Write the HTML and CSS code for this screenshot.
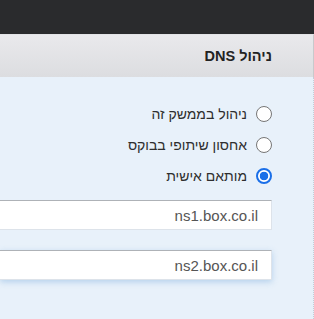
FILE: index.html
```html
<!DOCTYPE html>
<html lang="he" dir="rtl">
<head>
<meta charset="utf-8">
<link rel="stylesheet" href="styles.css">
</head>
<body>
<div class="topbar"></div>
<div class="layout">
  <div class="side-head"></div>
  <div class="head"><h2 class="title">ניהול DNS</h2></div>
  <div class="side-body"></div>
  <div class="body">
    <div class="options">
      <label class="opt"><span class="radio"></span><span>ניהול בממשק זה</span></label>
      <label class="opt"><span class="radio"></span><span>אחסון שיתופי בבוקס</span></label>
      <label class="opt"><span class="radio checked"></span><span>מותאם אישית</span></label>
    </div>
    <div class="field">ns1.box.co.il</div>
    <div class="field focus">ns2.box.co.il</div>
  </div>
</div>
</body>
</html>
```
FILE: styles.css
```css
* { box-sizing: border-box; }
html, body { margin: 0; padding: 0; }
body {
  width: 314px;
  height: 319px;
  overflow: hidden;
  font-family: "Liberation Sans", Arial, sans-serif;
  background: #e8f1fa;
  direction: rtl;
}
.topbar {
  height: 34px;
  background: #2a2b2d;
}
.layout {
  display: grid;
  grid-template-columns: 32px 1fr;
  grid-template-rows: 43px 242px;
}
.side-head, .head {
  background: linear-gradient(#e9e9ec, #dcdde0);
  border-top: 1px solid #e2e3e6;
}
.side-head {
  border-right: 1px solid #c8c9cc;
}
.head {
  display: flex;
  align-items: center;
  padding-right: 10px;
}
.title {
  margin: 0;
  font-size: 14.5px;
  font-weight: bold;
  color: #222;
}
.side-body {
  border-right: 1px dotted #c4ccd6;
  background: #e8f1fa;
}
.body {
  background: #e8f1fa;
  padding-top: 28px;
  padding-right: 10px;
}
.options {
  display: flex;
  flex-direction: column;
  gap: 13px;
}
.opt {
  display: flex;
  align-items: center;
  gap: 9px;
  font-size: 14px;
  color: #2e2e2e;
  height: 18px;
}
.radio {
  width: 16px;
  height: 16px;
  border-radius: 50%;
  border: 1px solid #767676;
  background: #fff;
  flex: none;
}
.radio.checked {
  border: 2px solid #1a6fe8;
  background: radial-gradient(circle, #1a6fe8 0 4px, #fff 4.6px);
}
.field {
  margin-top: 15px;
  height: 30px;
  background: #fff;
  border: 1px solid #dde3ea;
  border-left: none;
  border-top-color: #aeb2b7;
  font-size: 15px;
  color: #555;
  padding-right: 13px;
  display: flex;
  align-items: center;
}
.field + .field { margin-top: 20px; }
.field.focus {
  box-shadow: 0 2px 6px rgba(120, 170, 220, 0.45);
}
```
